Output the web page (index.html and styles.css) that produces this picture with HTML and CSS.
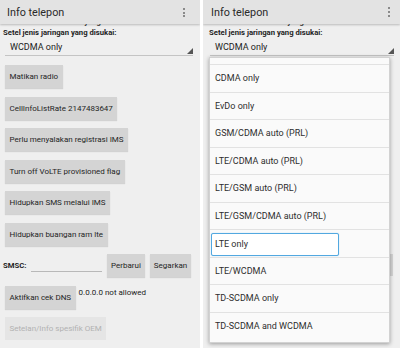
FILE: index.html
```html
<!DOCTYPE html>
<html>
<head>
<meta charset="utf-8">
<link rel="stylesheet" href="styles.css">
</head>
<body>
<div class="screen">
  <section class="phone phone-left">
    <header class="appbar"><span class="title">Info telepon</span><span class="dots"><i></i><i></i><i></i></span></header>
    <div class="content">
      <div class="cut"><span>Setel mode band radio yang disukai:</span></div>
      <div class="label">Setel jenis jaringan yang disukai:</div>
      <div class="spinner">WCDMA only<span class="tri"></span></div>
      <div class="buttons">
        <div class="btn">Matikan radio</div>
        <div class="btn">CellInfoListRate 2147483647</div>
        <div class="btn">Perlu menyalakan registrasi IMS</div>
        <div class="btn">Turn off VoLTE provisioned flag</div>
        <div class="btn">Hidupkan SMS melalui IMS</div>
        <div class="btn">Hidupkan buangan ram lte</div>
        <div class="smsc">
          <span class="smsc-label">SMSC:</span>
          <span class="field"></span>
          <div class="btn btn-small">Perbarui</div>
          <div class="btn btn-small">Segarkan</div>
        </div>
        <div class="dns">
          <div class="btn">Aktifkan cek DNS</div>
          <span class="dns-text">0.0.0.0 not allowed</span>
        </div>
        <div class="btn btn-disabled">Setelan/Info spesifik OEM</div>
      </div>
    </div>
  </section>
  <section class="phone phone-right">
    <header class="appbar"><span class="title">Info telepon</span><span class="dots"><i></i><i></i><i></i></span></header>
    <div class="content">
      <div class="cut"><span>Setel mode band radio yang disukai:</span></div>
      <div class="label">Setel jenis jaringan yang disukai:</div>
      <div class="spinner">WCDMA only<span class="tri"></span></div>
      <div class="under"><div class="under-btn"></div></div>
    </div>
    <div class="popup">
      <ul class="options">
        <li class="ghost"></li>
        <li>CDMA only</li>
        <li>EvDo only</li>
        <li>GSM/CDMA auto (PRL)</li>
        <li>LTE/CDMA auto (PRL)</li>
        <li>LTE/GSM auto (PRL)</li>
        <li>LTE/GSM/CDMA auto (PRL)</li>
        <li class="selected"><span class="sel">LTE only</span></li>
        <li>LTE/WCDMA</li>
        <li>TD-SCDMA only</li>
        <li>TD-SCDMA and WCDMA</li>
      </ul>
    </div>
  </section>
</div>
</body>
</html>
```
FILE: styles.css
```css
* { box-sizing: border-box; }
html, body { margin: 0; padding: 0; background: #ffffff; }
body { font-family: Roboto, "Liberation Sans", sans-serif; color: #222; }

.screen {
  width: 400px;
  height: 348px;
  display: flex;
  gap: 3px;
  overflow: hidden;
}

.phone {
  position: relative;
  height: 348px;
  background: #efefef;
  overflow: hidden;
}
.phone-left { width: 200px; }
.phone-right { width: 197px; }

.appbar {
  position: relative;
  z-index: 2;
  height: 24px;
  background: #e3e3e3;
  box-shadow: 0 1px 2px rgba(0,0,0,0.22);
  display: flex;
  align-items: center;
  justify-content: space-between;
  padding: 1px 15px 0 7px;
}
.phone-right .appbar { padding: 0 10px 0 8px; }
.title { font-size: 10.8px; color: #2a2a2a; }
.dots { display: flex; flex-direction: column; gap: 1.6px; }
.dots i { display: block; width: 2px; height: 2px; background: #8a8a8a; }

.content { display: flex; flex-direction: column; }

.cut {
  height: 4px;
  overflow: hidden;
  padding-left: 5px;
}
.cut span {
  display: block;
  margin-top: -7px;
  font-size: 7.7px;
  line-height: 10px;
  font-weight: bold;
  color: #444;
}

.label {
  height: 10px;
  line-height: 10px;
  font-size: 7.7px;
  font-weight: bold;
  color: #1e1e1e;
  padding-left: 3px;
}
.phone-right .label { padding-left: 6px; }

.spinner {
  position: relative;
  margin: 0 7px 0 5px;
  height: 18px;
  padding: 2px 0 0 5px;
  line-height: 14px;
  font-size: 9px;
  color: #222;
  border-bottom: 1px solid #c4c4c4;
}
.phone-right .spinner { margin: 0 6px 0 7px; }
.tri {
  position: absolute;
  right: 0;
  bottom: 1px;
  width: 0;
  height: 0;
  border-left: 6px solid transparent;
  border-bottom: 6px solid #555;
}

.buttons {
  margin-top: 9px;
  padding-left: 5px;
  display: flex;
  flex-direction: column;
  align-items: flex-start;
  gap: 8.5px;
}

.btn {
  height: 23px;
  display: flex;
  align-items: center;
  padding: 0 4.5px;
  background: #d4d4d4;
  box-shadow: 0 1px 1px rgba(0,0,0,0.12);
  font-size: 8px;
  color: #1f1f1f;
  white-space: nowrap;
}
.btn-small { padding: 0 4px; }
.btn-disabled { background: #e5e5e5; color: #b2b2b2; box-shadow: none; }

.smsc {
  display: flex;
  align-items: center;
  margin-left: -2px;
  height: 23px;
}
.smsc-label { font-size: 7.7px; font-weight: bold; color: #1e1e1e; width: 24px; }
.field {
  align-self: flex-start;
  margin: 17px 5px 0 4px;
  width: 71px;
  height: 1px;
  background: #b8b8b8;
}
.smsc .btn-small + .btn-small { margin-left: 5px; }

.dns { display: flex; align-items: flex-start; }
.dns-text {
  margin-left: 3px;
  line-height: 13px;
  font-size: 8px;
  color: #222;
}

.under {
  margin-top: 198px;
  display: flex;
  justify-content: flex-end;
  padding-right: 7px;
}
.under-btn {
  width: 40px;
  height: 22px;
  background: #d4d4d4;
}

.popup {
  position: absolute;
  z-index: 3;
  left: 6px;
  top: 57px;
  width: 181px;
  height: 286px;
  background: #fafafa;
  border: 1px solid #d2d2d2;
  box-shadow: 0 1px 4px rgba(0,0,0,0.35);
  overflow: hidden;
}
.options {
  list-style: none;
  margin: -20.5px 0 0 0;
  padding: 0;
}
.options li {
  height: 27.5px;
  display: flex;
  align-items: center;
  padding-left: 5px;
  font-size: 9px;
  color: #2e2e2e;
  border-bottom: 1px solid #e2e2e2;
}
.options li:last-child { border-bottom: none; }
.options li.selected { padding-left: 1px; align-items: flex-start; padding-top: 2.5px; }
.sel {
  display: flex;
  align-items: center;
  width: 128px;
  height: 23px;
  padding-left: 3px;
  background: #ffffff;
  border: 1px solid #52a8e0;
  border-radius: 2px;
  box-shadow: 0 0 1px #8fcaf0;
}
```
